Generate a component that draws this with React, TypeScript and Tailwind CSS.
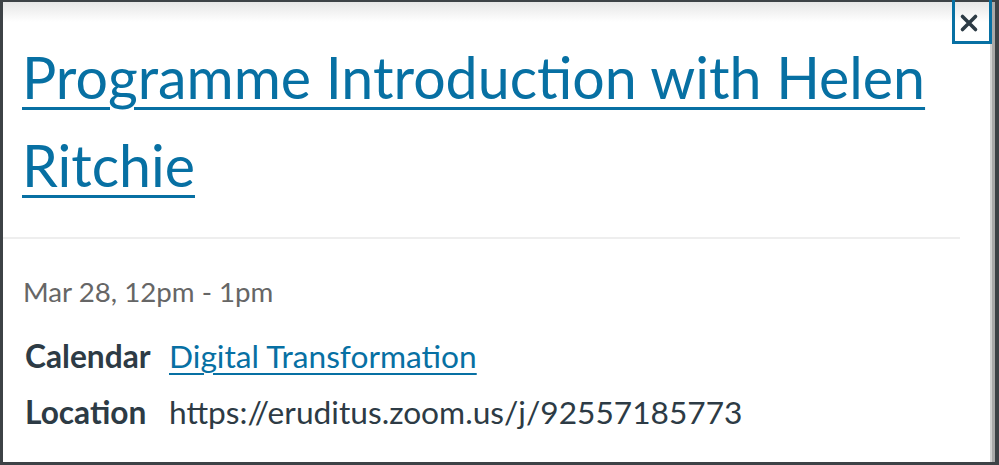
import React from "react";

export default function App() {
  return (
    <div className="w-[999px] h-[465px] bg-[#3d4246] pt-[2px] pl-[3px] pr-[4px] pb-[3px] overflow-hidden" style={{ fontFamily: "Lato, 'Noto Sans', sans-serif" }}>
      <div className="relative flex h-full bg-white">
        <div className="relative flex-1 overflow-hidden">
          <div className="absolute left-0 right-0 top-0 h-[20px] bg-gradient-to-b from-[#e6e6e6] to-white" />
          <div className="relative pl-[19px] pr-[20px] pt-[31px]">
            <a href="#" className="block text-[57.3px] leading-[88px] text-[#0770a3] underline decoration-[3px] underline-offset-[8px]">
              Programme Introduction with Helen Ritchie
            </a>
          </div>
          <div className="mt-[28px] mr-[30px] h-[2px] bg-[#eeeeee]" />
          <div className="pl-[20px] pt-[33px]">
            <div className="text-[27.7px] leading-[39px] text-[#666666]">Mar 28, 12pm - 1pm</div>
            <div className="mt-[17px] flex items-baseline text-[31.7px] leading-[56px] text-[#2d3b45]">
              <span className="w-[146px] pl-[2px] font-bold">Calendar</span>
              <a href="#" className="text-[#0770a3] underline decoration-[2px] underline-offset-[5px]">Digital Transformation</a>
            </div>
            <div className="flex items-baseline text-[31.7px] leading-[56px] text-[#2d3b45]">
              <span className="w-[146px] pl-[2px] font-bold">Location</span>
              <span>https://eruditus.zoom.us/j/92557185773</span>
            </div>
          </div>
        </div>
        <div className="flex w-[5px]">
          <div className="w-[2px] bg-[#d2d2d2]" />
          <div className="w-[3px] bg-[#a9a9a9]" />
        </div>
        <button className="absolute top-[-6px] right-[3px] w-[40px] h-[48px] border-[3px] border-[#0770a3] flex items-center justify-center pt-[6px] pr-[6px]">
          <svg width="20" height="20" viewBox="0 0 20 20">
            <path d="M3.5 3.5 L16.5 16.5 M16.5 3.5 L3.5 16.5" stroke="#2d3b45" strokeWidth="3.6" strokeLinecap="round" />
          </svg>
        </button>
      </div>
    </div>
  );
}
